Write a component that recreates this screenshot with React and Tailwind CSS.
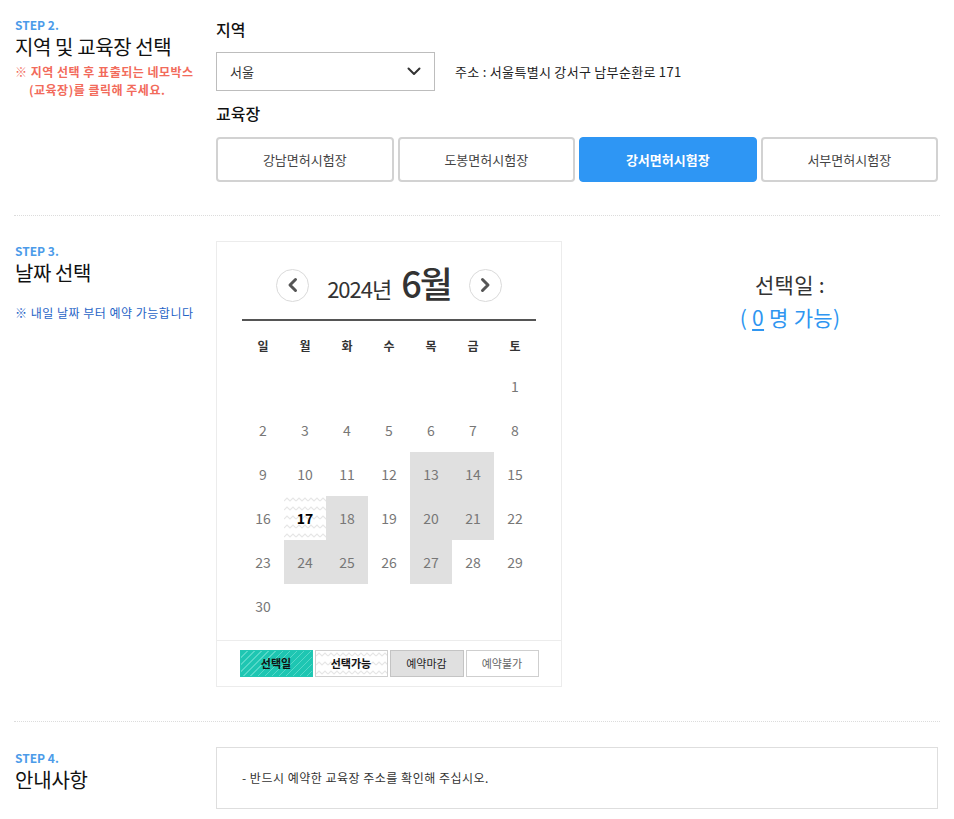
import React from "react";

const FONT = { fontFamily: '"Noto Sans CJK KR", "Noto Sans", sans-serif' };

function Zigzag() {
  return (
    <svg className="absolute inset-0 h-full w-full" aria-hidden="true">
      <defs>
        <pattern id="zz" width="12" height="9" patternUnits="userSpaceOnUse">
          <path d="M0 5 L3 2 L6 5 L9 2 L12 5" fill="none" stroke="#e6e6e6" strokeWidth="1.2" />
        </pattern>
      </defs>
      <rect width="100%" height="100%" fill="url(#zz)" />
    </svg>
  );
}

function Chevron({ dir }) {
  return (
    <svg width="14" height="16" viewBox="0 0 14 16" aria-hidden="true">
      {dir === "left" ? (
        <path d="M9.5 2.5 L4 8 L9.5 13.5" fill="none" stroke="#555" strokeWidth="3" strokeLinecap="round" strokeLinejoin="round" />
      ) : (
        <path d="M4.5 2.5 L10 8 L4.5 13.5" fill="none" stroke="#555" strokeWidth="3" strokeLinecap="round" strokeLinejoin="round" />
      )}
    </svg>
  );
}

const gray = new Set([13, 14, 18, 20, 21, 24, 25, 27]);

export default function App() {
  const cells = [];
  for (let i = 0; i < 6; i++) cells.push(null);
  for (let d = 1; d <= 30; d++) cells.push(d);
  while (cells.length < 42) cells.push(null);

  return (
    <div className="min-h-[819px] w-[954px] bg-white text-[#222]" style={FONT}>
      {/* STEP 2 */}
      <div className="mx-[14px] border-b border-dotted border-[#dcdcdc] pb-[33px] pt-[17px]">
        <div className="grid grid-cols-[202px_1fr] pr-[2px]">
          <div className="pl-[1px]">
            <div className="text-[12px] font-bold leading-[16px] text-[#4b9be9]">STEP 2.</div>
            <div className="text-[20px] leading-[28px] tracking-[-0.4px] text-[#111]">지역 및 교육장 선택</div>
            <div className="mt-[2px] text-[12px] font-bold leading-[18px] tracking-[0.5px] text-[#f26b5b]">
              <div>※ 지역 선택 후 표출되는 네모박스</div>
              <div className="pl-[14px]">(교육장)를 클릭해 주세요.</div>
            </div>
          </div>
          <div>
            <div className="text-[16px] font-medium leading-[24px] text-[#111]">지역</div>
            <div className="mt-[11px] flex items-center">
              <div className="flex h-[39px] w-[219px] items-center justify-between border border-[#bdbdbd] pl-[13px] pr-[13px]">
                <span className="text-[13px] text-[#333]">서울</span>
                <svg width="14" height="9" viewBox="0 0 14 9" aria-hidden="true">
                  <path d="M1.5 1.5 L7 7 L12.5 1.5" fill="none" stroke="#333" strokeWidth="2" strokeLinecap="round" strokeLinejoin="round" />
                </svg>
              </div>
              <div className="ml-[20px] text-[13px] tracking-[0.3px] text-[#222]">주소 : 서울특별시 강서구 남부순환로 171</div>
            </div>
            <div className="mt-[10px] text-[16px] font-medium leading-[24px] text-[#111]">교육장</div>
            <div className="mt-[12px] grid grid-cols-4 gap-[4px]">
              {["강남면허시험장", "도봉면허시험장", "강서면허시험장", "서부면허시험장"].map((n) => {
                const active = n === "강서면허시험장";
                return (
                  <div
                    key={n}
                    className={
                      active
                        ? "flex h-[45px] items-center justify-center rounded-[4px] border border-[#2e96f4] bg-[#2e96f4] text-[13px] font-bold text-white"
                        : "flex h-[45px] items-center justify-center rounded-[4px] border-2 border-[#d2d2d2] bg-white text-[13px] text-[#444]"
                    }
                  >
                    {n}
                  </div>
                );
              })}
            </div>
          </div>
        </div>
      </div>

      {/* STEP 3 */}
      <div className="mx-[14px] border-b border-dotted border-[#dcdcdc] pb-[34px] pt-[25px]">
        <div className="grid grid-cols-[202px_1fr] pr-[2px]">
          <div className="pl-[1px] pt-[2px]">
            <div className="text-[12px] font-bold leading-[16px] text-[#4b9be9]">STEP 3.</div>
            <div className="text-[20px] leading-[28px] tracking-[-0.4px] text-[#111]">날짜 선택</div>
            <div className="mt-[17px] text-[12px] leading-[18px] tracking-[0.5px] text-[#1f63c6]">※ 내일 날짜 부터 예약 가능합니다</div>
          </div>
          <div className="flex">
            <div className="w-[346px] border border-[#ececec]">
              <div className="mx-[25px] flex h-[79px] items-end justify-center border-b-2 border-[#555] pb-[17px]">
                <div className="flex h-[34px] items-center">
                  <div className="flex h-[33px] w-[33px] items-center justify-center rounded-full border border-[#dadada]">
                    <Chevron dir="left" />
                  </div>
                  <div className="mx-[18px] flex items-baseline text-[#333]">
                    <span className="text-[22px] tracking-[-1px]">2024년</span>
                    <span className="ml-[10px] text-[36px] font-medium leading-[34px] tracking-[-2px]">6월</span>
                  </div>
                  <div className="flex h-[33px] w-[33px] items-center justify-center rounded-full border border-[#dadada]">
                    <Chevron dir="right" />
                  </div>
                </div>
              </div>
              <div className="mx-[25px] mt-[10px] grid h-[30px] grid-cols-7 items-center text-center text-[12px] font-bold text-[#333]">
                {["일", "월", "화", "수", "목", "금", "토"].map((w) => (
                  <div key={w}>{w}</div>
                ))}
              </div>
              <div className="mx-[25px] mt-[3px] grid grid-cols-7 grid-rows-[repeat(6,44px)]">
                {cells.map((d, i) => {
                  if (d === null) return <div key={i} />;
                  if (d === 17)
                    return (
                      <div key={i} className="relative flex items-center justify-center">
                        <Zigzag />
                        <span className="relative text-[14px] font-bold text-black">17</span>
                      </div>
                    );
                  return (
                    <div
                      key={i}
                      className={
                        gray.has(d)
                          ? "flex items-center justify-center bg-[#e0e0e0] text-[14px] text-[#777]"
                          : "flex items-center justify-center text-[14px] text-[#777]"
                      }
                    >
                      {d}
                    </div>
                  );
                })}
              </div>
              <div className="mt-[12px] flex justify-center gap-[2px] border-t border-[#ececec] py-[9px]">
                <div className="flex h-[27px] w-[73px] items-center justify-center border border-[#22c7b3] bg-[repeating-linear-gradient(135deg,#1ec6b2_0px,#1ec6b2_4px,#55d8c8_4px,#55d8c8_5px)] text-[11px] font-bold text-[#111]">
                  선택일
                </div>
                <div className="relative flex h-[27px] w-[73px] items-center justify-center border border-[#cfcfcf] bg-white text-[11px] font-bold text-[#111]">
                  <Zigzag />
                  <span className="relative">선택가능</span>
                </div>
                <div className="flex h-[27px] w-[74px] items-center justify-center border border-[#c4c4c4] bg-[#e0e0e0] text-[11px] text-[#222]">
                  예약마감
                </div>
                <div className="flex h-[27px] w-[73px] items-center justify-center border border-[#cfcfcf] bg-white text-[11px] text-[#666]">
                  예약불가
                </div>
              </div>
            </div>
            <div className="flex-1 pl-[80px] pt-[27px] text-center text-[21px] leading-[33px] tracking-[0.3px]">
              <div className="text-[#333]">선택일 :</div>
              <div className="text-[#2f96f1]">
                ( <span className="underline underline-offset-[3px]">0</span> 명 가능)
              </div>
            </div>
          </div>
        </div>
      </div>

      {/* STEP 4 */}
      <div className="mx-[14px] pt-[25px]">
        <div className="grid grid-cols-[202px_1fr] pr-[2px]">
          <div className="pl-[1px] pt-[3px]">
            <div className="text-[12px] font-bold leading-[16px] text-[#4b9be9]">STEP 4.</div>
            <div className="text-[20px] leading-[28px] tracking-[-0.2px] text-[#111]">안내사항</div>
          </div>
          <div className="flex h-[62px] items-center border border-[#dedede] pl-[25px] text-[12px] tracking-[0.5px] text-[#333]">
            - 반드시 예약한 교육장 주소를 확인해 주십시오.
          </div>
        </div>
      </div>
    </div>
  );
}
